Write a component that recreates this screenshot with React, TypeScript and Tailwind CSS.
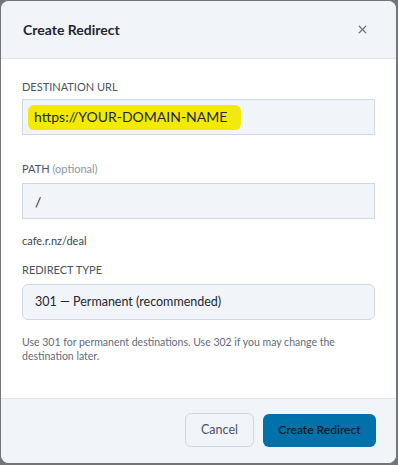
import { X } from 'lucide-react';

export default function App() {
  return (
    <div className="h-[465px] w-[398px] bg-[#72767a] p-px" style={{ fontFamily: 'Lato, "Noto Sans", sans-serif' }}>
      <div className="flex h-[462px] w-[395px] flex-col overflow-hidden rounded-lg bg-white">
        <header className="flex h-[58px] shrink-0 items-center justify-between border-b border-[#dde4ec] bg-[#f1f4f8] pl-[22px] pr-[27px]">
          <h2 className="text-[14px] font-bold text-[#1f2733]">Create Redirect</h2>
          <X className="h-[13px] w-[13px] text-[#6b7685]" strokeWidth={2.4} />
        </header>

        <main className="flex-1 px-[21px] pt-[20px]">
          <label className="block text-[11px] leading-[16px] text-[#4a5563]">DESTINATION URL</label>
          <div className="mt-[4px] flex h-[36px] items-center border border-[#cfd8e3] bg-[#f1f4f8] pl-[5px]">
            <span className="rounded-[6px] bg-[#f2ea00] pl-[6px] pr-[14px] py-[2.5px] text-[14px] leading-[20px] text-[#1f2733]">
              https://YOUR-DOMAIN-NAME
            </span>
          </div>

          <label className="mt-[26px] block text-[11px] leading-[16px] text-[#4a5563]">
            PATH <span className="normal-case text-[#8a94a3]">(optional)</span>
          </label>
          <div className="mt-[6px] flex h-[36px] items-center border border-[#cfd8e3] bg-[#f1f4f8] px-[12px] text-[14px] text-[#1f2733]">
            /
          </div>
          <p className="mt-[14px] text-[11px] leading-[16px] text-[#3a4350]">cafe.r.nz/deal</p>

          <label className="mt-[13px] block text-[11px] leading-[16px] text-[#4a5563]">REDIRECT TYPE</label>
          <div className="mt-[6px] flex h-[36px] items-center rounded-[6px] border border-[#cfd8e3] bg-[#f1f4f8] px-[12px] text-[12.5px] text-[#1f2733]">
            301 — Permanent (recommended)
          </div>
          <p className="mt-[15px] pr-[30px] text-[10.5px] leading-[14px] text-[#5f6b7a]">
            Use 301 for permanent destinations. Use 302 if you may change the destination later.
          </p>
        </main>

        <footer className="flex h-[65px] shrink-0 items-center justify-end gap-[9px] border-t border-[#dde4ec] bg-[#f1f4f8] pr-[20px] pb-[2px]">
          <button className="h-[34px] w-[69px] rounded-[6px] border border-[#cfd8e3] bg-[#f1f4f8] text-[12.5px] text-[#4a5563]">
            Cancel
          </button>
          <button className="h-[33px] w-[113px] rounded-[6px] bg-[#0072a9] text-[12px] font-semibold text-[#0d1a28]">
            Create Redirect
          </button>
        </footer>
      </div>
    </div>
  );
}
